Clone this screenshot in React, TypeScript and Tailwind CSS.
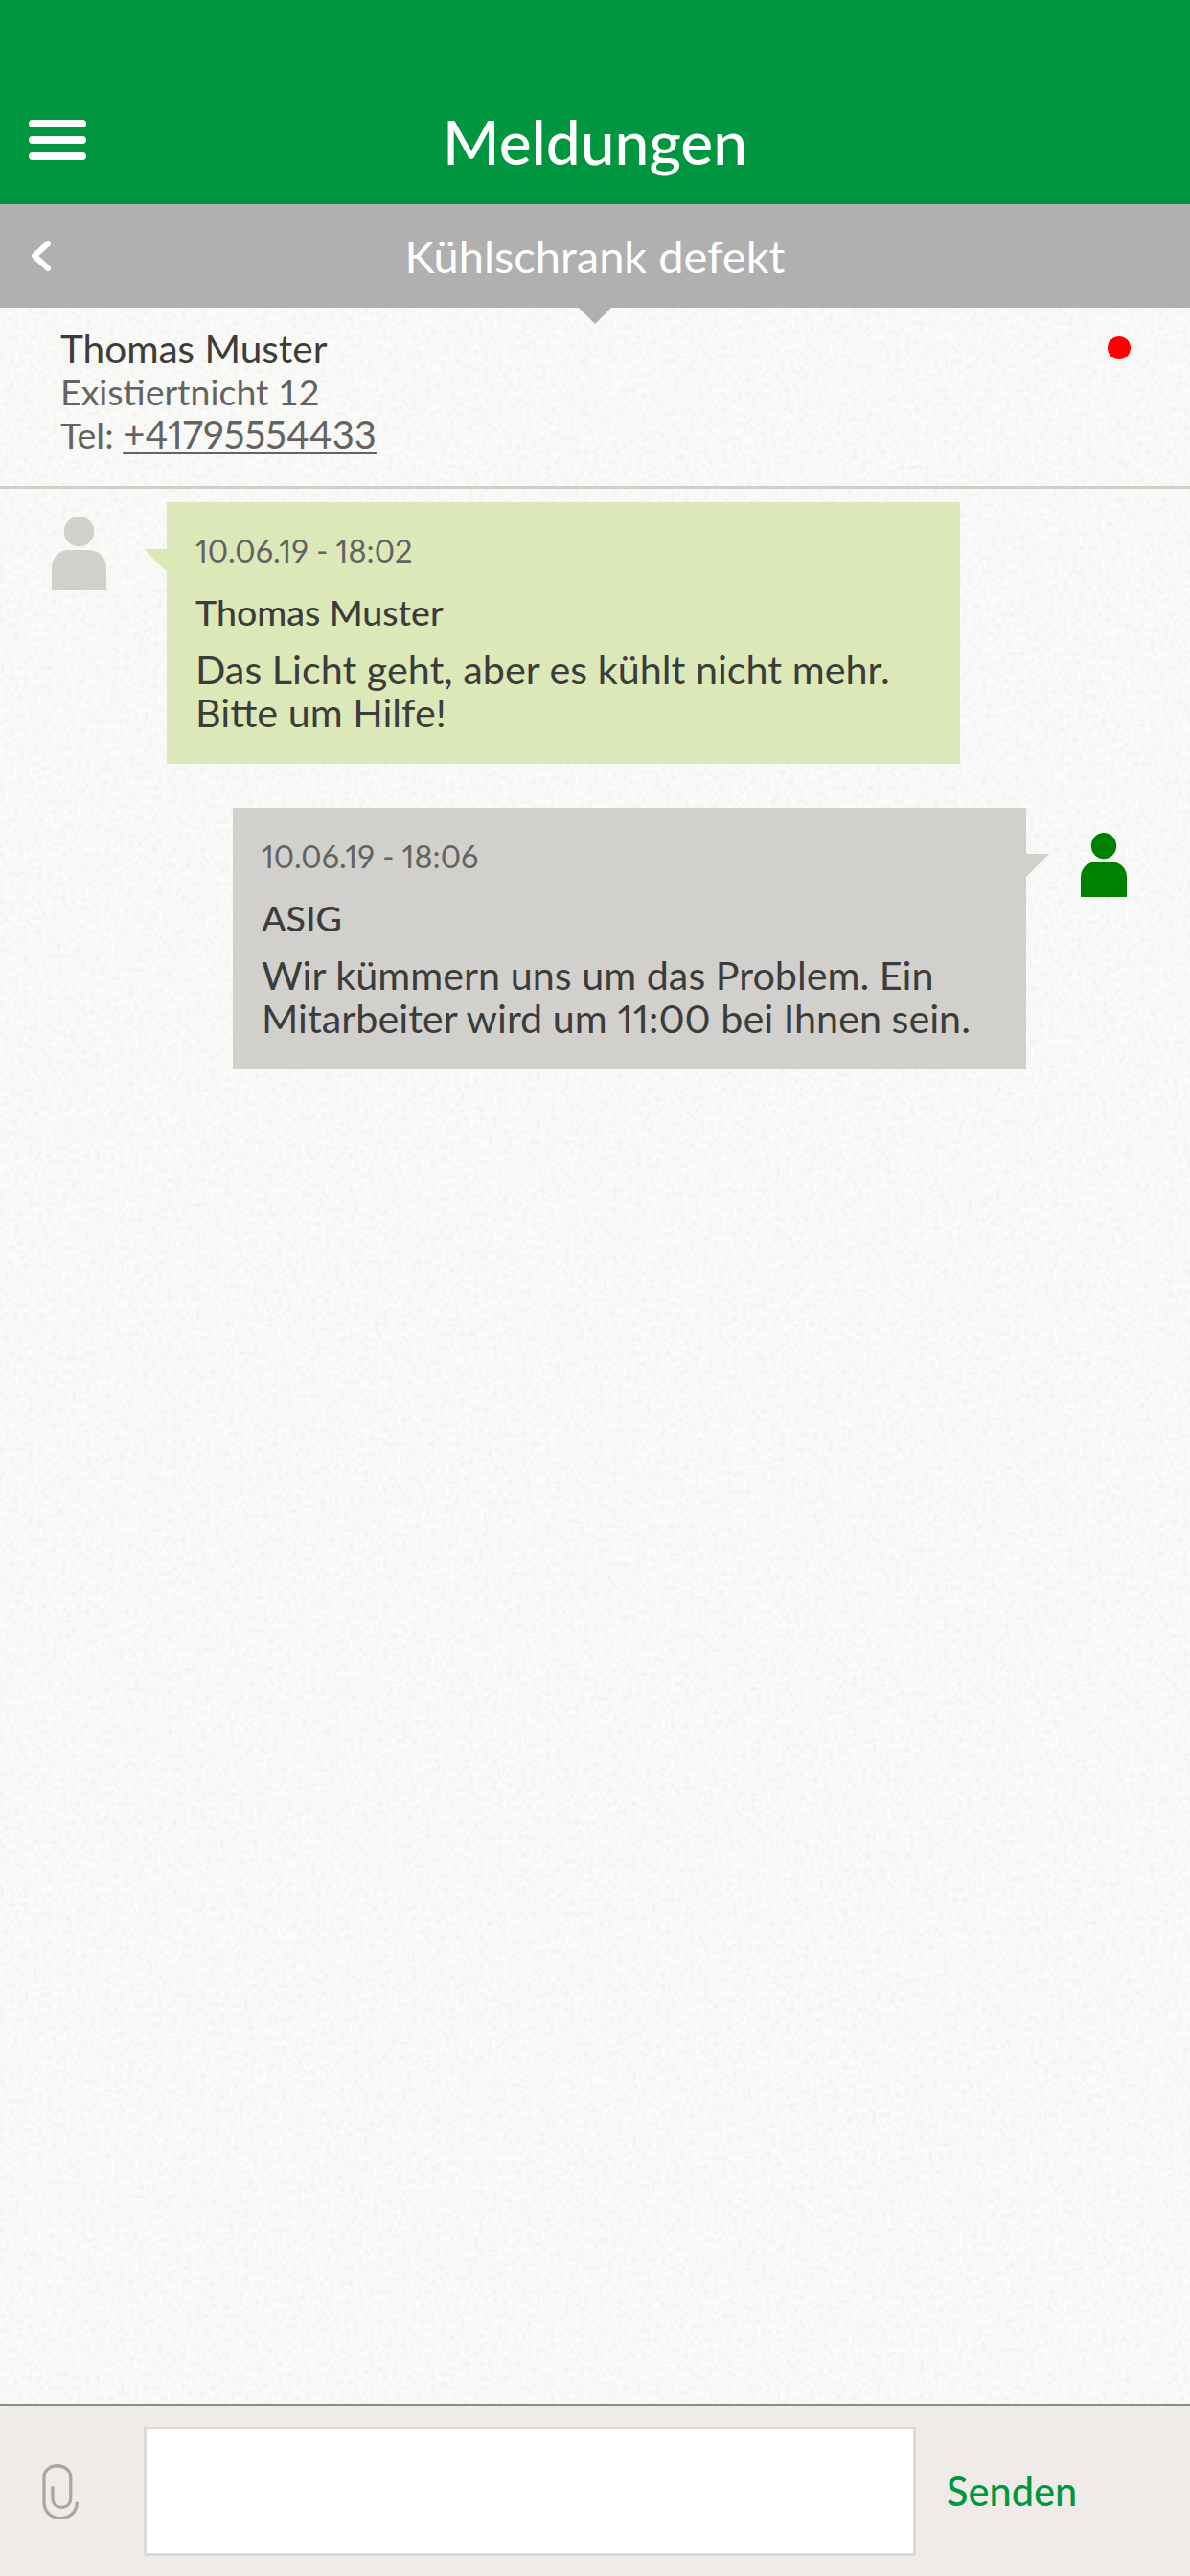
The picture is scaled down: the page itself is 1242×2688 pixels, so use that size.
const fontFamily = "font-['Lato','Liberation_Sans',sans-serif]";

function Person({ className }: { className: string }) {
  return (
    <svg viewBox="0 0 57 77" preserveAspectRatio="none" className={className} fill="currentColor">
      <circle cx="28.5" cy="15.7" r="15.7" />
      <path d="M0 77V53C0 43 8 35 18 35H39C49 35 57 43 57 53V77Z" />
    </svg>
  );
}

function Bubble({
  date,
  name,
  lines,
  className,
  tail,
}: {
  date: string;
  name: string;
  lines: string[];
  className: string;
  tail: React.ReactNode;
}) {
  return (
    <div className={`relative w-[828px] px-[30px] pt-[28px] pb-[31px] proportional-nums ${className}`}>
      {tail}
      <p className="text-[32.5px] leading-[46px] text-[#646363]">{date}</p>
      <p className="mt-[18px] text-[37.5px] leading-[45px] font-medium text-[#3c3c3b]">{name}</p>
      <div className="mt-[15px] text-[41.3px] leading-[45px] text-[#3c3c3b]">
        {lines.map(l => (
          <p key={l}>{l}</p>
        ))}
      </div>
    </div>
  );
}

export default function App() {
  return (
    <div className={`relative isolate flex h-[2688px] w-[1242px] flex-col overflow-hidden bg-[#fafaf8] ${fontFamily}`}>
      {/* Paper texture */}
      <svg className="absolute inset-0 -z-10 h-full w-full" aria-hidden="true">
        <filter id="paper" colorInterpolationFilters="sRGB">
          <feTurbulence type="fractalNoise" baseFrequency="0.2" numOctaves="3" seed="4" />
          <feColorMatrix values="0 0 0 0 0.4  0 0 0 0 0.4  0 0 0 0 0.38  0.14 0 0 0 -0.06" />
        </filter>
        <rect width="100%" height="100%" filter="url(#paper)" />
      </svg>

      {/* Top bar */}
      <header className="grid h-[213px] shrink-0 grid-cols-[1fr_auto_1fr] items-end bg-[#009640] px-[30px] pb-[29px] text-white">
        <div className="mb-[17px] flex w-[60px] flex-col gap-[9px]">
          <span className="h-[8px] rounded-full bg-white" />
          <span className="h-[8px] rounded-full bg-white" />
          <span className="h-[8px] rounded-full bg-white" />
        </div>
        <h1 className="text-[64px] leading-[72px] font-medium">Meldungen</h1>
      </header>

      {/* Sub bar */}
      <div className="relative grid h-[108px] shrink-0 grid-cols-[1fr_auto_1fr] items-center bg-[#b0b0b0] pl-[33px] text-white">
        <svg viewBox="0 0 20 32" className="h-[32px] w-[20px]" fill="none" stroke="currentColor" strokeWidth="6" strokeLinecap="round" strokeLinejoin="round">
          <path d="M17 3L3 16L17 29" />
        </svg>
        <h2 className="-ml-[33px] text-[47px] leading-[54px]">Kühlschrank defekt</h2>
        <span className="absolute top-full left-[604px] h-[17px] w-[34px] bg-[#b0b0b0] [clip-path:polygon(0_0,100%_0,50%_100%)]" />
      </div>

      {/* Contact */}
      <section className="flex shrink-0 items-start justify-between border-b-[3px] border-[#d0cfcb] pt-[20px] pr-[62px] pb-[31px] pl-[63px] text-[37.5px] leading-[45px] text-[#646363]">
        <div>
          <p className="text-[40.5px] text-[#3c3c3b]">Thomas Muster</p>
          <p>Existiertnicht 12</p>
          <p className="proportional-nums">
            Tel: <span className="text-[40px] underline decoration-2 underline-offset-4">+41795554433</span>
          </p>
        </div>
        <span className="mt-[10px] h-[24px] w-[24px] rounded-full bg-[#ff0000]" />
      </section>

      {/* Messages */}
      <main className="flex flex-1 flex-col gap-[46px] pt-[14px]">
        <div className="flex items-start pl-[54px]">
          <Person className="mt-[15px] h-[77px] w-[57px] text-[#d2d0cc]" />
          <div className="ml-[63px]">
            <Bubble
              date="10.06.19 - 18:02"
              name="Thomas Muster"
              lines={["Das Licht geht, aber es kühlt nicht mehr.", "Bitte um Hilfe!"]}
              className="bg-[#dde8b9]"
              tail={<span className="absolute top-[49px] -left-[24px] h-[24px] w-[24px] bg-[#dde8b9] [clip-path:polygon(0_0,100%_0,100%_100%)]" />}
            />
          </div>
        </div>
        <div className="flex items-start pl-[243px]">
          <Bubble
            date="10.06.19 - 18:06"
            name="ASIG"
            lines={["Wir kümmern uns um das Problem. Ein", "Mitarbeiter wird um 11:00 bei Ihnen sein."]}
            className="bg-[#d2d0cd]"
            tail={<span className="absolute top-[48px] -right-[24px] h-[24px] w-[24px] bg-[#d2d0cd] [clip-path:polygon(0_0,100%_0,0_100%)]" />}
          />
          <Person className="mt-[26px] ml-[57px] h-[67px] w-[48px] text-[#008000]" />
        </div>
      </main>

      {/* Composer */}
      <footer className="flex h-[180px] shrink-0 items-center border-t-[3px] border-[#8c8c8c] bg-[#eeebe8]">
        <div className="flex w-[150px] justify-center pr-[24px]">
          <svg viewBox="70 85 115 175" className="h-[58px] w-[38px]" fill="none" stroke="#a9a7a3" strokeWidth="10">
            <path d="M103 155V192C103 212 116 222 131 222C147 222 160 212 160 192V128C160 105 142 90 118 90C94 90 76 105 76 128V205C76 238 100 256 128 256C156 256 180 238 180 205" />
          </svg>
        </div>
        <div className="h-[135px] w-[806px] rounded-[2px] border-[3px] border-[#dcd9d6] bg-white" />
        <span className="ml-[32px] text-[41.5px] leading-[45px] font-medium text-[#009640]">Senden</span>
      </footer>
    </div>
  );
}
